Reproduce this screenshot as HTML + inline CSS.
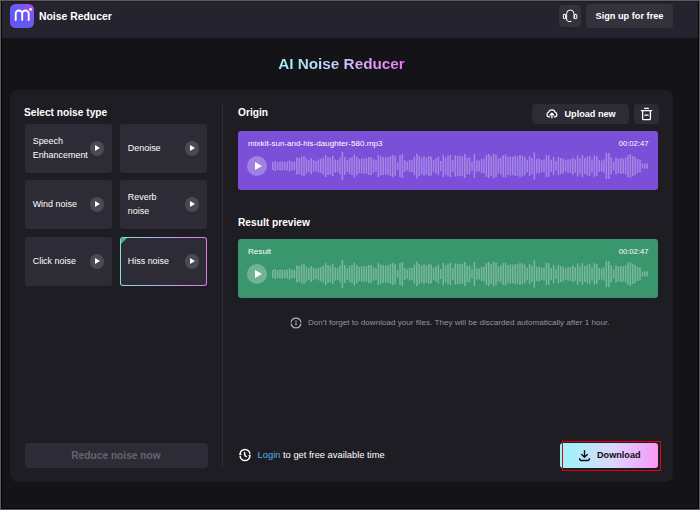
<!DOCTYPE html>
<html lang="en">
<head>
<meta charset="utf-8">
<title>AI Noise Reducer</title>
<style>
*{box-sizing:border-box;margin:0;padding:0}
html,body{width:700px;height:510px;overflow:hidden;background:#5c5c5f}
body{font-family:"Liberation Sans",sans-serif;color:#fff;position:relative}
.frame{position:absolute;left:1px;top:1px;width:698px;height:508px;background:#050508}
.page{position:absolute;left:1px;top:1px;width:696px;height:506px;background:#141318;overflow:hidden}
/* all coordinates below are relative to .page (offset 2,2 from screenshot) */
.abs{position:absolute}
.header{position:absolute;left:0;top:0;width:696px;height:36px;background:#25242e}
.logo{position:absolute;left:8px;top:2px;width:24px;height:24px}
.brand{position:absolute;left:37px;top:7.5px;font-weight:bold;font-size:10.4px;line-height:14px;white-space:nowrap}
.hbtn{position:absolute;background:#34333d;border-radius:4px}
.support{left:557px;top:3px;width:22px;height:22px}
.signup{left:584px;top:2px;width:87px;height:24px;font-weight:bold;font-size:9.2px;line-height:24px;text-align:center;white-space:nowrap}
.title{position:absolute;left:0;top:52px;width:679px;text-align:center;font-weight:bold;font-size:15.3px;line-height:20px;white-space:nowrap}
.title span{background:linear-gradient(90deg,#9feff3 0%,#b9dcf9 35%,#d4bbf9 55%,#e596f7 78%,#ea76f4 100%);-webkit-background-clip:text;background-clip:text;color:transparent}
.panel{position:absolute;left:8px;top:88px;width:663px;height:392px;background:#1e1d23;border-radius:8px}
.h2{position:absolute;font-weight:bold;font-size:10.2px;line-height:14px;white-space:nowrap}
.card{position:absolute;width:87.7px;height:49px;background:#2d2c36;border-radius:3px;font-size:8.95px;line-height:14.3px}
.card .t{position:absolute;left:8.1px;top:calc(50% - 0.5px);transform:translateY(-50%);white-space:nowrap}
.card .pb{position:absolute;left:65.2px;top:17.2px;width:14.6px;height:14.6px;border-radius:50%;background:#4b4a54}
.card .pb:after{content:"";position:absolute;left:5.2px;top:4.1px;border-left:5.5px solid #fff;border-top:3.2px solid transparent;border-bottom:3.2px solid transparent}
.card.sel{background:linear-gradient(90deg,#7fe0e0,#e07be8);padding:1px}
.card.sel .in{position:absolute;left:1px;top:1px;right:1px;bottom:1px;background:#2d2c36;border-radius:2px;overflow:hidden}
.card.sel .in:before{content:"";position:absolute;left:0;top:0;border-top:6px solid #3fb58a;border-right:6px solid transparent}
.vline{position:absolute;left:220px;top:102px;width:1px;height:364px;background:#2c2b33}
.btn2{position:absolute;background:#2d2c36;border-radius:4px}
.audio{position:absolute;left:236px;width:420px;height:58px}
.abg{position:absolute;left:235.8px;width:420.2px;border-radius:3px}
.audio .name{position:absolute;left:10px;top:7px;font-size:8.1px;line-height:10px;white-space:nowrap}
.audio .time{position:absolute;right:9.5px;top:7px;font-size:7.65px;line-height:10px;white-space:nowrap}
.audio .play{position:absolute;left:9px;top:24.5px;width:20px;height:20px;border-radius:50%;background:rgba(255,255,255,0.28)}
.audio .play:after{content:"";position:absolute;left:7.5px;top:5.5px;border-left:7.5px solid #fff;border-top:4.5px solid transparent;border-bottom:4.5px solid transparent}
.audio .wave{position:absolute;left:34px;top:18.5px}
.note{position:absolute;left:306px;top:315px;font-size:8.1px;line-height:11px;color:#9594a0;white-space:nowrap}
.reduce{position:absolute;left:22.5px;top:441px;width:183px;height:24.5px;background:#2d2c36;border-radius:4px;color:#65646e;font-weight:bold;font-size:10.2px;line-height:26px;text-align:center;white-space:nowrap}
.login{position:absolute;left:255.6px;top:446.2px;font-size:9.33px;line-height:14px;white-space:nowrap}
.login a{color:#4fb3ec;text-decoration:none}
.dl{position:absolute;left:558px;top:441px;width:98px;height:25px;border-radius:3px;background:linear-gradient(90deg,#98f6f9 0%,#d9d9fc 52%,#f998f7 100%);color:#0e0d12;font-weight:bold;font-size:9.12px;line-height:25px;white-space:nowrap}
.dl span{position:absolute;left:37px;top:0}
.red{position:absolute;left:560px;top:438.8px;width:99.4px;height:30.2px;border:1.9px solid #e8000e}
svg{display:block}
</style>
</head>
<body>
<div class="frame"><div style="position:absolute;left:1px;top:0;width:696px;height:1px;background:#1c1b22"></div><div class="page">

  <div class="header">
    <svg class="logo" viewBox="0 0 24 24">
      <defs>
        <linearGradient id="lg" x1="0" y1="1" x2="1" y2="0">
          <stop offset="0" stop-color="#7a4df5"/>
          <stop offset="0.35" stop-color="#5a5cf2"/>
          <stop offset="0.7" stop-color="#7b55f3"/>
          <stop offset="1" stop-color="#b04cf2"/>
        </linearGradient>
      </defs>
      <rect width="24" height="24" rx="5.5" fill="url(#lg)"/>
      <path d="M5.7 16.1V9.8a3.25 3.25 0 0 1 6.5 0V15.9M12.2 9.8a3.25 3.25 0 0 1 6.5 0V16.1" fill="none" stroke="#fff" stroke-width="1.9" stroke-linecap="round"/>
      <circle cx="20.6" cy="5.4" r="1.4" fill="#fff"/>
    </svg>
    <div class="brand">Noise Reducer</div>
    <div class="hbtn support">
      <svg width="22" height="22" viewBox="0 0 22 22" fill="none" stroke="#fff" stroke-width="1" stroke-linecap="round" stroke-linejoin="round">
        <path d="M7.6 14.3V8.7a3.7 3.7 0 0 1 7.4 0V13.6"/>
        <rect x="4.4" y="9.4" width="2.2" height="4.3" rx="0.6"/>
        <rect x="15.6" y="9.4" width="2.2" height="4.3" rx="0.6"/>
        <path d="M7.6 14.3c0.2 1.5 1 2.2 2.3 2.2h2.1"/>
      </svg>
    </div>
    <div class="hbtn signup">Sign up for free</div>
  </div>

  <div class="title"><span>AI Noise Reducer</span></div>

  <div class="panel"></div>
  <div class="vline"></div>

  <div class="h2" style="left:22px;top:103.6px">Select noise type</div>

  <div class="card" style="left:22.6px;top:122px"><div class="t">Speech<br>Enhancement</div><div class="pb"></div></div>
  <div class="card" style="left:117.7px;top:122px"><div class="t">Denoise</div><div class="pb"></div></div>
  <div class="card" style="left:22.6px;top:178px"><div class="t">Wind noise</div><div class="pb"></div></div>
  <div class="card" style="left:117.7px;top:178px"><div class="t">Reverb<br>noise</div><div class="pb"></div></div>
  <div class="card" style="left:22.6px;top:235px"><div class="t">Click noise</div><div class="pb"></div></div>
  <div class="card sel" style="left:117.7px;top:235px"><div class="in"></div><div class="t">Hiss noise</div><div class="pb"></div></div>

  <div class="h2" style="left:236px;top:103.6px">Origin</div>

  <div class="btn2" style="left:530px;top:102px;width:96.5px;height:19.5px">
    <svg class="abs" style="left:14.1px;top:4.1px" width="11.8" height="10.96" viewBox="0 0 14 13" fill="none" stroke="#fff" stroke-width="1.5" stroke-linecap="round" stroke-linejoin="round">
      <path d="M4.2 10.6H3.6a2.7 2.7 0 0 1-.5-5.3 4 4 0 0 1 7.8 0 2.7 2.7 0 0 1-.5 5.3H9.8"/>
      <path d="M7 11.6V6.4M4.9 8.3L7 6.2l2.1 2.1"/>
    </svg>
    <div class="abs" style="left:32.5px;top:0;font-weight:bold;font-size:9.15px;line-height:21.2px;white-space:nowrap">Upload new</div>
  </div>
  <div class="btn2" style="left:632px;top:102px;width:24.5px;height:19.5px">
    <svg class="abs" style="left:6px;top:3px" width="13" height="14" viewBox="0 0 13 14" fill="none" stroke="#fff" stroke-width="1.3" stroke-linecap="round" stroke-linejoin="round">
      <path d="M1.3 3.6h10.4M4.6 1.3h3.8M2.6 3.8v7.6a1.2 1.2 0 0 0 1.2 1.2h5.4a1.2 1.2 0 0 0 1.2-1.2V3.8M4.9 8.2h3.2"/>
    </svg>
  </div>

  <div class="abg" style="top:129px;height:59.2px;background:#7c4fd9"></div>
  <div class="audio" style="top:129.5px">
    <div class="name">mixkit-sun-and-his-daughter-580.mp3</div>
    <div class="time">00:02:47</div>
    <div class="play"></div>
    <svg class="wave" width="378" height="32" viewBox="0 0 378 32"><path d="M0.8 12.0V20.0M3.2 11.0V21.0M5.6 12.0V20.0M8.0 11.5V20.5M10.4 11.5V20.5M12.8 12.0V20.0M15.2 11.5V20.5M17.6 10.5V21.5M20.0 11.5V20.5M22.4 12.0V20.0M24.8 7.5V24.5M27.2 8.0V24.0M29.6 6.5V25.5M32.0 6.0V26.0M34.4 8.5V23.5M36.8 10.0V22.0M39.2 8.0V24.0M41.6 10.0V22.0M44.0 11.0V21.0M46.4 9.5V22.5M48.8 9.0V23.0M51.2 7.5V24.5M53.6 5.0V27.0M56.0 7.0V25.0M58.4 7.5V24.5M60.8 6.0V26.0M63.2 9.5V22.5M65.6 10.0V22.0M68.0 7.5V24.5M70.4 2.0V30.0M72.8 7.0V25.0M75.2 10.0V22.0M77.6 8.0V24.0M80.0 7.0V25.0M82.4 4.5V27.5M84.8 7.0V25.0M87.2 9.0V23.0M89.6 8.5V23.5M92.0 8.5V23.5M94.4 8.0V24.0M96.8 7.0V25.0M99.2 7.0V25.0M101.6 9.0V23.0M104.0 10.5V21.5M106.4 5.0V27.0M108.8 6.5V25.5M111.2 7.0V25.0M113.6 7.5V24.5M116.0 7.0V25.0M118.4 6.0V26.0M120.8 5.0V27.0M123.2 6.0V26.0M125.6 12.3V19.7M128.0 5.0V27.0M130.4 4.0V28.0M132.8 10.1V21.9M135.2 11.6V20.4M137.6 9.7V22.3M140.0 9.9V22.1M142.4 6.7V25.3M144.8 3.8V28.2M147.2 5.9V26.1M149.6 7.5V24.5M152.0 6.2V25.8M154.4 7.4V24.6M156.8 5.9V26.1M159.2 6.4V25.6M161.6 9.8V22.2M164.0 8.5V23.5M166.4 6.8V25.2M168.8 11.0V21.0M171.2 5.0V27.0M173.6 7.4V24.6M176.0 5.4V26.6M178.4 5.0V27.0M180.8 10.0V22.0M183.2 5.6V26.4M185.6 5.8V26.2M188.0 5.8V26.2M190.4 6.3V25.7M192.8 4.0V28.0M195.2 7.7V24.3M197.6 7.6V24.4M200.0 11.4V20.6M202.4 4.0V28.0M204.8 10.5V21.5M207.2 10.5V21.5M209.6 8.9V23.1M212.0 8.7V23.3M214.4 5.0V27.0M216.8 4.0V28.0M219.2 6.3V25.7M221.6 3.8V28.2M224.0 4.7V27.3M226.4 8.4V23.6M228.8 7.5V24.5M231.2 5.0V27.0M233.6 4.5V27.5M236.0 6.9V25.1M238.4 6.6V25.4M240.8 6.7V25.3M243.2 6.1V25.9M245.6 6.3V25.7M248.0 5.0V27.0M250.4 5.7V26.3M252.8 6.8V25.2M255.2 9.7V22.3M257.6 6.1V25.9M260.0 7.9V24.1M262.4 2.5V29.5M264.8 8.7V23.3M267.2 8.4V23.6M269.6 10.0V22.0M272.0 9.2V22.8M274.4 4.7V27.3M276.8 5.2V26.8M279.2 10.0V22.0M281.6 6.8V25.2M284.0 11.3V20.7M286.4 7.0V25.0M288.8 7.9V24.1M291.2 8.4V23.6M293.6 10.2V21.8M296.0 9.2V22.8M298.4 9.3V22.7M300.8 7.5V24.5M303.2 9.3V22.7M305.6 5.5V26.5M308.0 8.2V23.8M310.4 5.0V27.0M312.8 7.9V24.1M315.2 6.8V25.2M317.6 6.0V26.0M320.0 9.5V22.5M322.4 5.2V26.8M324.8 6.0V26.0M327.2 10.0V22.0M329.6 10.5V21.5M332.0 9.5V22.5M334.4 3.0V29.0M336.8 3.0V29.0M339.2 7.5V24.5M341.6 11.4V20.6M344.0 7.4V24.6M346.4 8.7V23.3M348.8 8.1V23.9M351.2 8.4V23.6M353.6 7.6V24.4M356.0 5.0V27.0M358.4 4.0V28.0M360.8 6.0V26.0M363.2 7.0V25.0M365.6 9.0V23.0M368.0 9.5V22.5M370.4 13.5V18.5M372.8 13.5V18.5M375.2 13.5V18.5" stroke="rgba(255,255,255,0.32)" stroke-width="1.5" fill="none"/></svg>
  </div>

  <div class="h2" style="left:236px;top:213.8px">Result preview</div>

  <div class="abg" style="top:237.3px;height:58.4px;background:#3a976d"></div>
  <div class="audio" style="top:237.5px">
    <div class="name">Result</div>
    <div class="time">00:02:47</div>
    <div class="play"></div>
    <svg class="wave" width="378" height="32" viewBox="0 0 378 32"><path d="M0.8 12.0V20.0M3.2 11.0V21.0M5.6 12.0V20.0M8.0 11.5V20.5M10.4 11.5V20.5M12.8 12.0V20.0M15.2 11.5V20.5M17.6 10.5V21.5M20.0 11.5V20.5M22.4 12.0V20.0M24.8 7.5V24.5M27.2 8.0V24.0M29.6 6.5V25.5M32.0 6.0V26.0M34.4 8.5V23.5M36.8 10.0V22.0M39.2 8.0V24.0M41.6 10.0V22.0M44.0 11.0V21.0M46.4 9.5V22.5M48.8 9.0V23.0M51.2 7.5V24.5M53.6 5.0V27.0M56.0 7.0V25.0M58.4 7.5V24.5M60.8 6.0V26.0M63.2 9.5V22.5M65.6 10.0V22.0M68.0 7.5V24.5M70.4 2.0V30.0M72.8 7.0V25.0M75.2 10.0V22.0M77.6 8.0V24.0M80.0 7.0V25.0M82.4 4.5V27.5M84.8 7.0V25.0M87.2 9.0V23.0M89.6 8.5V23.5M92.0 8.5V23.5M94.4 8.0V24.0M96.8 7.0V25.0M99.2 7.0V25.0M101.6 9.0V23.0M104.0 10.5V21.5M106.4 5.0V27.0M108.8 6.5V25.5M111.2 7.0V25.0M113.6 7.5V24.5M116.0 7.0V25.0M118.4 6.0V26.0M120.8 5.0V27.0M123.2 6.0V26.0M125.6 12.3V19.7M128.0 5.0V27.0M130.4 4.0V28.0M132.8 10.1V21.9M135.2 11.6V20.4M137.6 9.7V22.3M140.0 9.9V22.1M142.4 6.7V25.3M144.8 3.8V28.2M147.2 5.9V26.1M149.6 7.5V24.5M152.0 6.2V25.8M154.4 7.4V24.6M156.8 5.9V26.1M159.2 6.4V25.6M161.6 9.8V22.2M164.0 8.5V23.5M166.4 6.8V25.2M168.8 11.0V21.0M171.2 5.0V27.0M173.6 7.4V24.6M176.0 5.4V26.6M178.4 5.0V27.0M180.8 10.0V22.0M183.2 5.6V26.4M185.6 5.8V26.2M188.0 5.8V26.2M190.4 6.3V25.7M192.8 4.0V28.0M195.2 7.7V24.3M197.6 7.6V24.4M200.0 11.4V20.6M202.4 4.0V28.0M204.8 10.5V21.5M207.2 10.5V21.5M209.6 8.9V23.1M212.0 8.7V23.3M214.4 5.0V27.0M216.8 4.0V28.0M219.2 6.3V25.7M221.6 3.8V28.2M224.0 4.7V27.3M226.4 8.4V23.6M228.8 7.5V24.5M231.2 5.0V27.0M233.6 4.5V27.5M236.0 6.9V25.1M238.4 6.6V25.4M240.8 6.7V25.3M243.2 6.1V25.9M245.6 6.3V25.7M248.0 5.0V27.0M250.4 5.7V26.3M252.8 6.8V25.2M255.2 9.7V22.3M257.6 6.1V25.9M260.0 7.9V24.1M262.4 2.5V29.5M264.8 8.7V23.3M267.2 8.4V23.6M269.6 10.0V22.0M272.0 9.2V22.8M274.4 4.7V27.3M276.8 5.2V26.8M279.2 10.0V22.0M281.6 6.8V25.2M284.0 11.3V20.7M286.4 7.0V25.0M288.8 7.9V24.1M291.2 8.4V23.6M293.6 10.2V21.8M296.0 9.2V22.8M298.4 9.3V22.7M300.8 7.5V24.5M303.2 9.3V22.7M305.6 5.5V26.5M308.0 8.2V23.8M310.4 5.0V27.0M312.8 7.9V24.1M315.2 6.8V25.2M317.6 6.0V26.0M320.0 9.5V22.5M322.4 5.2V26.8M324.8 6.0V26.0M327.2 10.0V22.0M329.6 10.5V21.5M332.0 9.5V22.5M334.4 3.0V29.0M336.8 3.0V29.0M339.2 7.5V24.5M341.6 11.4V20.6M344.0 7.4V24.6M346.4 8.7V23.3M348.8 8.1V23.9M351.2 8.4V23.6M353.6 7.6V24.4M356.0 5.0V27.0M358.4 4.0V28.0M360.8 6.0V26.0M363.2 7.0V25.0M365.6 9.0V23.0M368.0 9.5V22.5M370.4 13.5V18.5M372.8 13.5V18.5M375.2 13.5V18.5" stroke="rgba(255,255,255,0.32)" stroke-width="1.5" fill="none"/></svg>
  </div>

  <svg class="abs" style="left:286.95px;top:313.65px" width="14" height="14" viewBox="0 0 14 14" fill="none" stroke="#b0b0b8" stroke-width="1.25">
    <path d="M2.1 6.35A4.95 4.95 0 0 1 11.9 6.35M11.9 7.65A4.95 4.95 0 0 1 2.1 7.65"/>
    <path d="M7 6.6V9.2" stroke-width="1.25"/><circle cx="7" cy="5" r="0.75" fill="#b0b0b8" stroke="none"/>
  </svg>
  <div class="note">Don't forget to download your files. They will be discarded automatically after 1 hour.</div>

  <div class="reduce">Reduce noise now</div>

  <svg class="abs" style="left:236.2px;top:446.3px" width="14" height="14" viewBox="0 0 14 14" fill="none" stroke="#fff" stroke-width="1.45" stroke-linecap="butt" stroke-linejoin="round">
    <path d="M2.1 6.3A4.9 4.9 0 0 1 11.9 6.3M11.9 7.7A4.9 4.9 0 0 1 2.1 7.7"/>
    <path d="M1.3 6.3H3.4M10.6 7.7H12.7" stroke-width="1.2"/>
    <path d="M6.6 4.4V6.4Q6.7 7.9 8.4 8.6" stroke-width="1.4" stroke-linecap="round"/>
  </svg>
  <div class="login"><a>Login</a> to get free available time</div>

  <div class="dl">
    <svg class="abs" style="left:18px;top:6px" width="13" height="13" viewBox="0 0 13 13" fill="none" stroke="#0e0d12" stroke-width="1.35" stroke-linecap="round" stroke-linejoin="round">
      <path d="M6.5 1.6v6.4M3.7 5.5l2.8 2.7 2.8-2.7M1.6 9.6c0 1.3.7 1.9 1.9 1.9h6c1.2 0 1.9-.6 1.9-1.9"/>
    </svg>
    <span>Download</span>
  </div>
  <div class="red"></div>

</div></div>
</body>
</html>
